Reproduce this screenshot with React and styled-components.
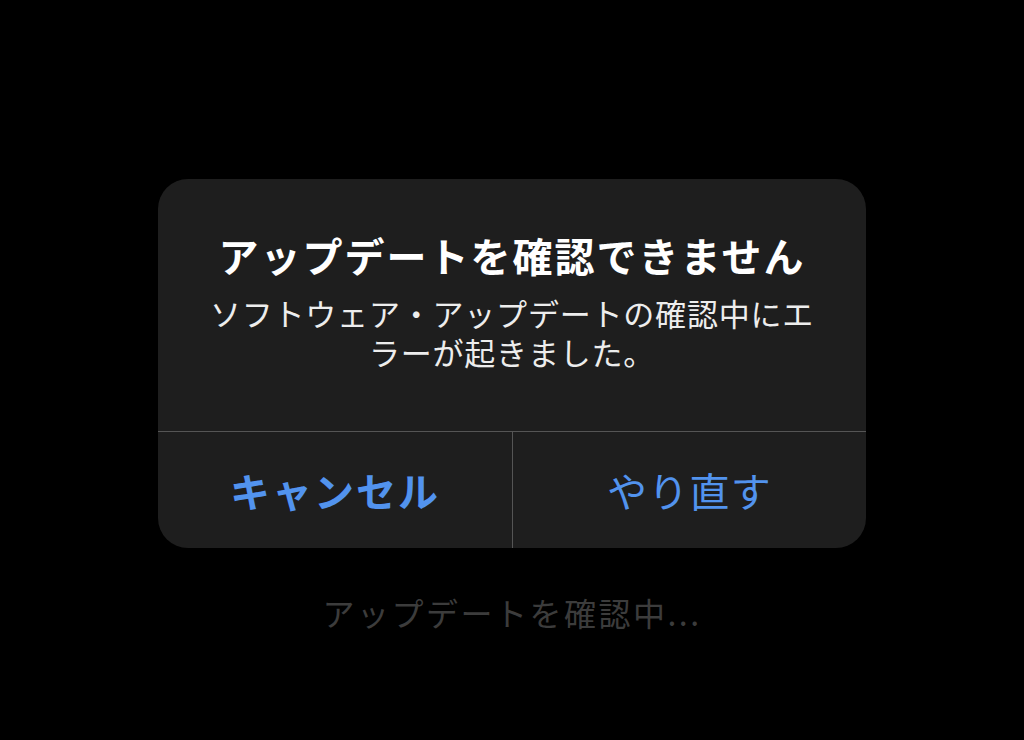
import React from "react";
import styled, { createGlobalStyle } from "styled-components";

const GlobalStyle = createGlobalStyle`
  html, body {
    margin: 0;
    padding: 0;
    background: #000;
  }
  body {
    font-family: "Noto Sans CJK JP", "Noto Sans", sans-serif;
    -webkit-font-smoothing: antialiased;
  }
`;

const Screen = styled.div`
  width: 1024px;
  height: 740px;
  background: #000;
  display: flex;
  flex-direction: column;
  align-items: center;
  padding-top: 179px;
  box-sizing: border-box;
  overflow: hidden;
`;

const Alert = styled.div`
  width: 708px;
  background: #1e1e1e;
  border-radius: 30px;
  overflow: hidden;
  display: flex;
  flex-direction: column;
`;

const Body = styled.div`
  height: 252px;
  box-sizing: border-box;
  padding: 52px 30px 0;
  display: flex;
  flex-direction: column;
  align-items: center;
  text-align: center;
`;

const Title = styled.h1`
  margin: 0;
  font-size: 40px;
  line-height: 48px;
  font-weight: 700;
  letter-spacing: 2px;
  color: #ffffff;
`;

const Message = styled.p`
  margin: 14px 0 0;
  font-size: 31px;
  line-height: 39px;
  font-weight: 400;
  letter-spacing: 0.8px;
  color: #ededed;
`;

const Line = styled.span`
  display: block;
`;

const Actions = styled.div`
  height: 116px;
  display: grid;
  grid-template-columns: 1fr 1fr;
  border-top: 1px solid #555555;
`;

const Action = styled.button`
  appearance: none;
  border: none;
  background: transparent;
  margin: 0;
  padding: 0;
  font-family: inherit;
  font-size: 40px;
  font-weight: ${(p) => (p.$primary ? 700 : 400)};
  letter-spacing: ${(p) => (p.$primary ? "2px" : "1.3px")};
  color: #5293ee;
  display: flex;
  align-items: center;
  justify-content: center;
  & + & {
    border-left: 1px solid #555555;
  }
`;

const Status = styled.div`
  margin-top: 44px;
  font-size: 32px;
  line-height: 40px;
  letter-spacing: 2.5px;
  color: #3c3c3c;
`;

export default function App() {
  return (
    <>
      <GlobalStyle />
      <Screen>
        <Alert>
          <Body>
            <Title>アップデートを確認できません</Title>
            <Message>
              <Line>ソフトウェア・アップデートの確認中にエ</Line>
              <Line>ラーが起きました。</Line>
            </Message>
          </Body>
          <Actions>
            <Action $primary>キャンセル</Action>
            <Action>やり直す</Action>
          </Actions>
        </Alert>
        <Status>アップデートを確認中...</Status>
      </Screen>
    </>
  );
}
